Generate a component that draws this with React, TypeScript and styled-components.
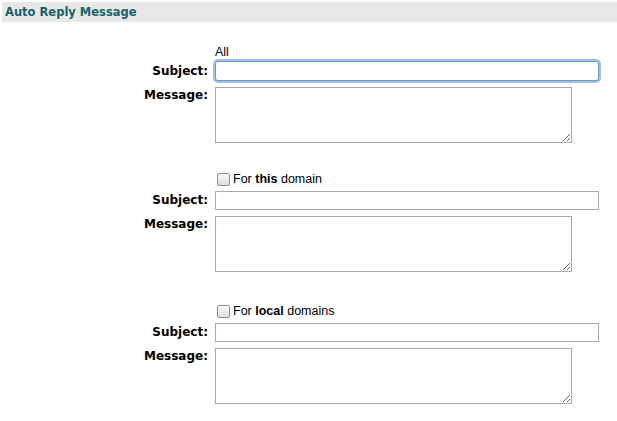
import React from "react";
import styled, { createGlobalStyle } from "styled-components";

const Global = createGlobalStyle`
  body { margin: 0; background: #fff; font-family: "DejaVu Sans", Verdana, sans-serif; }
`;

const Header = styled.div`
  margin: 2px 0 0 2px;
  height: 20px;
  background: #e8e8e8;
  display: flex;
  align-items: center;
  padding-left: 3px;
  font: bold 11.5px "DejaVu Sans", Verdana, sans-serif;
  color: #1b5f68;
`;

const Section = styled.div<{ $top: number }>`
  margin-top: ${(p) => p.$top}px;
  display: grid;
  grid-template-columns: 208px 1fr;
  column-gap: 7px;
  align-items: start;
`;

const Label = styled.div`
  text-align: right;
  font-weight: bold;
  font-size: 12px;
  color: #000;
  line-height: 16px;
`;

const Head = styled.div<{ $gap: number }>`
  grid-column: 2;
  font: 12.5px "Liberation Sans", Arial, sans-serif;
  color: #000;
  display: flex;
  align-items: center;
  gap: 3px;
  height: 16px;
  margin-bottom: ${(p) => p.$gap}px;
  b { font-weight: bold; }
`;

const Box = styled.span`
  width: 11px;
  height: 11px;
  border: 1px solid #8f8f8f;
  border-radius: 2px;
  background: linear-gradient(#fdfdfd, #dcdcdc);
  margin-left: 2px;
`;

const Input = styled.input<{ $focus?: boolean }>`
  box-sizing: border-box;
  width: 384px;
  height: ${(p) => (p.$focus ? 20 : 19)}px;
  margin: 0 0 6px;
  border: 1px solid ${(p) => (p.$focus ? "#6f98c6" : "#aaa")};
  box-shadow: ${(p) => (p.$focus ? "0 0 0 2px #9fbfe3" : "none")};
  border-radius: ${(p) => (p.$focus ? "3px" : "0")};
  font-size: 12px;
  padding: 0 3px;
  outline: none;
`;

const Area = styled.textarea`
  box-sizing: border-box;
  width: 357px;
  height: 56px;
  border: 1px solid #aaa;
  margin: 0;
  resize: both;
`;

function Block({ top, head, gap, focus }: { top: number; head: React.ReactNode; gap: number; focus?: boolean }) {
  return (
    <Section $top={top}>
      <Head $gap={gap}>{head}</Head>
      <Label style={{ lineHeight: focus ? "20px" : "19px" }}>Subject:</Label>
      <Input $focus={focus} defaultValue="" />
      <Label>Message:</Label>
      <Area />
    </Section>
  );
}

export default function App() {
  return (
    <>
      <Global />
      <Header>Auto Reply Message</Header>
      <Block top={22} gap={1} focus head={<span>All</span>} />
      <Block
        top={28}
        gap={4}
        head={<><Box /><span>For <b>this</b> domain</span></>}
      />
      <Block
        top={31}
        gap={4}
        head={<><Box /><span>For <b>local</b> domains</span></>}
      />
    </>
  );
}
